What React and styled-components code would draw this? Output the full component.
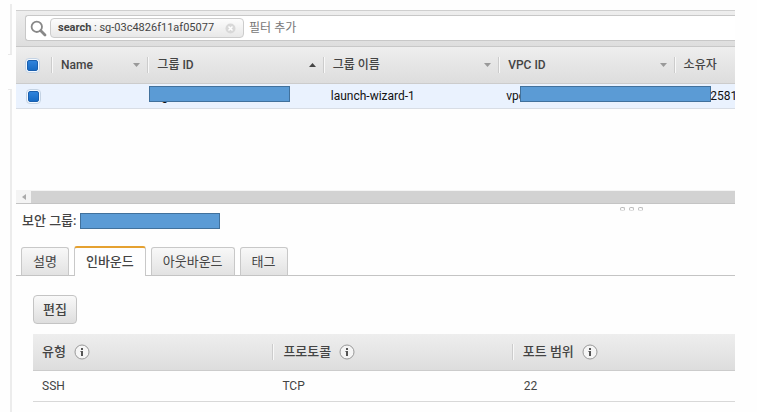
import React from "react";
import styled, { createGlobalStyle } from "styled-components";

const GlobalStyle = createGlobalStyle`
  *, *::before, *::after { box-sizing: border-box; }
  body {
    margin: 0;
    background: #fefefe;
    color: #444;
    font: 12px/16px Roboto, "Noto Sans CJK KR", sans-serif;
  }
  button, input { font: inherit; color: inherit; }
`;

const Page = styled.div`
  display: flex;
  min-height: 100vh;
  padding-right: 22px;
  overflow: hidden;
`;

const Rail = styled.aside`
  flex: 0 0 16px;
  display: flex;
  flex-direction: column;
  gap: 34px;
  padding: 4px 4px 0 8px;
`;

const RailPanel = styled.div`
  border-right: 2px solid #ececec;
  border-top: ${(p) => (p.$fill ? "1px solid #e8e8e8" : "0")};
  border-bottom: ${(p) => (p.$fill ? "0" : "1px solid #e8e8e8")};
  ${(p) => (p.$fill ? "flex: 1;" : "height: 51px;")}
`;

const Main = styled.main`
  flex: 1;
  min-width: 0;
  padding-top: 10px;
`;

const FilterBar = styled.div`
  padding: 4px 0 5px 9px;
  border-top: 1px solid #cfcfcf;
  border-bottom: 1px solid #c8c8c8;
  background: linear-gradient(#eeeeee, #dedede);
`;

const SearchBox = styled.div`
  display: flex;
  align-items: center;
  height: 26px;
  padding-left: 4px;
  border: 1px solid #c8c8c8;
  border-right: 0;
  border-radius: 3px 0 0 3px;
  background: #fff;
`;

const Chip = styled.span`
  display: flex;
  align-items: center;
  flex: none;
  height: 20px;
  margin-left: 3px;
  padding: 0 7px;
  gap: 11px;
  border: 1px solid #ccc;
  border-radius: 4px;
  background: linear-gradient(#fcfcfc, #e8e8e8);
  font-size: 11px;
  white-space: pre;
`;

const ClearButton = styled.button`
  display: flex;
  padding: 0;
  border: 0;
  background: none;
`;

const FilterInput = styled.input`
  flex: 1;
  min-width: 0;
  height: 20px;
  padding: 0 5px;
  border: 0;
  outline: 0;
  background: none;
  &::placeholder { color: #777; opacity: 1; }
`;

const GridPanel = styled.section`
  height: 143px;
  overflow: hidden;
`;

const Grid = styled.table`
  width: 100%;
  table-layout: fixed;
  border-collapse: separate;
  border-spacing: 0;
`;

const Col = styled.col`
  width: ${(p) => p.$w};
`;

const HeadCell = styled.th`
  height: 37px;
  padding: 0 7px 0 9px;
  text-align: left;
  font-weight: 500;
  color: #444;
  border-bottom: 1px solid #ccc;
  background: linear-gradient(#eeeeee, #dddddd);
`;

const CheckHead = styled(HeadCell)`
  padding: 0 0 0 9px;
`;

const HeadInner = styled.div`
  display: flex;
  align-items: center;
  justify-content: space-between;
  height: 16px;
  margin-left: -9px;
  padding-left: 9px;
  border-left: 1px solid #ccc;
  box-shadow: inset 1px 0 #f8f8f8;
`;

const Cell = styled.td`
  position: relative;
  height: 25px;
  padding: 0 0 0 ${(p) => p.$pad || "8px"};
  color: #111;
  white-space: nowrap;
  border-bottom: 1px solid #d8dde5;
  background: #eaf2fe;
`;

const Check = styled.input`
  appearance: none;
  display: block;
  width: 15px;
  height: 15px;
  margin: 0;
  border: 1px solid #c4d3e4;
  border-radius: 4px;
  background: #f4f9ff;
  padding: 1px;
  &:checked::before {
    content: "";
    display: block;
    width: 11px;
    height: 11px;
    border: 1px solid #1a5fae;
    border-radius: 2px;
    background: linear-gradient(#2f83dc, #176bc5);
  }
`;

const Mask = styled.span`
  flex: none;
  width: ${(p) => p.$w};
  height: 16px;
  border: 1px solid #41719c;
  background: #5b9bd5;
`;

const CellMask = styled(Mask)`
  position: absolute;
  z-index: 1;
  top: 2px;
  left: ${(p) => p.$left};
`;

const ScrollBar = styled.div`
  display: flex;
  align-items: center;
  height: 14px;
  border-bottom: 1px solid #c4c4c4;
  background: #f4f4f4;
`;

const ScrollButton = styled.button`
  display: flex;
  align-items: center;
  justify-content: center;
  width: 15px;
  height: 12px;
  padding: 0;
  border: 0;
  background: none;
`;

const ScrollThumb = styled.div`
  flex: 1;
  height: 12px;
  background: #d2d2d2;
`;

const Splitter = styled.div`
  display: flex;
  justify-content: flex-end;
  gap: 4px;
  height: 9px;
  padding: 3px 92px 0 0;
`;

const Grip = styled.i`
  width: 5px;
  height: 4px;
  border: 1px solid #bbb;
  border-bottom-color: #ddd;
  border-radius: 2px;
`;

const Title = styled.h2`
  display: flex;
  align-items: center;
  gap: 3px;
  margin: 0;
  padding-left: 6px;
  font-size: 13px;
  line-height: 16px;
  font-weight: 500;
`;

const Tabs = styled.div`
  display: flex;
  gap: 5px;
  height: 30px;
  margin-top: 17px;
  padding-left: 5px;
  border-bottom: 1px solid #c4c4c4;
`;

const Tab = styled.button`
  height: ${(p) => (p.$active ? "30px" : "29px")};
  margin-top: ${(p) => (p.$active ? "0" : "1px")};
  padding: 0 11px;
  border: 1px solid #c8c8c8;
  border-bottom: ${(p) => (p.$active ? "0" : "1px solid #c4c4c4")};
  border-top: ${(p) => (p.$active ? "2px solid #e5a130" : "1px solid #c8c8c8")};
  border-radius: 3px 3px 0 0;
  background: ${(p) => (p.$active ? "#fefefe" : "linear-gradient(#f8f8f8, #e2e2e2)")};
  font-size: 13px;
  line-height: 16px;
  font-weight: ${(p) => (p.$active ? 500 : 400)};
`;

const Detail = styled.section`
  padding: 19px 0 0 17px;
`;

const EditButton = styled.button`
  display: block;
  height: 29px;
  margin-bottom: 10px;
  padding: 0 9px;
  border: 1px solid #c4c4c4;
  border-radius: 4px;
  background: linear-gradient(#f9f9f9, #dedede);
  font-size: 13px;
  line-height: 16px;
  font-weight: 500;
`;

const RuleHead = styled(HeadCell)`
  height: 37px;
  padding: 0;
  font-size: 13px;
`;

const RuleLabel = styled.div`
  display: flex;
  align-items: center;
  gap: 8px;
  height: 16px;
  padding-left: ${(p) => (p.$first ? "9px" : "10px")};
  border-left: ${(p) => (p.$first ? "0" : "1px solid #ccc")};
  box-shadow: ${(p) => (p.$first ? "none" : "inset 1px 0 #f8f8f8")};
`;

const RuleCell = styled.td`
  height: 31px;
  padding: 0 0 0 ${(p) => p.$pad};
  border-bottom: 1px solid #d8d8d8;
`;

const SearchIcon = () => (
  <svg width="17" height="17" viewBox="0 0 17 17" fill="none" stroke="#888" aria-hidden="true">
    <circle cx="6.8" cy="6.8" r="5.2" strokeWidth="1.8" />
    <path d="M10.8 10.8 15 15" strokeWidth="2.8" strokeLinecap="round" />
  </svg>
);

const ClearIcon = () => (
  <svg width="11" height="11" viewBox="0 0 11 11" aria-hidden="true">
    <circle cx="5.5" cy="5.5" r="5" fill="#d8d8d8" />
    <path d="m3.5 3.5 4 4m0-4-4 4" stroke="#fff" strokeWidth="1.5" />
  </svg>
);

const SortIcon = ({ up }) => (
  <svg width="7" height="4" viewBox="0 0 7 4" aria-hidden="true">
    <path d={up ? "M0 4 3.5 0 7 4Z" : "M0 0h7L3.5 4Z"} fill={up ? "#444" : "#999"} />
  </svg>
);

const InfoIcon = () => (
  <svg width="16" height="16" viewBox="0 0 16 16" aria-hidden="true">
    <circle cx="8" cy="8" r="7" fill="#f5f5f5" stroke="#999" />
    <rect x="7" y="4" width="2" height="2" fill="#555" />
    <path d="M7 7h2v5H7Z" fill="#555" />
    <path d="M6 7h1v1H6Z" fill="#999" />
  </svg>
);

const columns = [
  { label: "Name" },
  { label: "그룹 ID", up: true },
  { label: "그룹 이름" },
  { label: "VPC ID" },
  { label: "소유자", plain: true },
];

const rules = ["유형", "프로토콜", "포트 범위"];
const tabs = ["설명", "인바운드", "아웃바운드", "태그"];

export default function App() {
  return (
    <Page>
      <GlobalStyle />
      <Rail>
        <RailPanel />
        <RailPanel $fill />
      </Rail>
      <Main>
        <FilterBar>
          <SearchBox>
            <SearchIcon />
            <Chip>
              <span><b>search</b> : sg-03c4826f11af05077</span>
              <ClearButton aria-label="필터 제거"><ClearIcon /></ClearButton>
            </Chip>
            <FilterInput aria-label="필터 추가" placeholder="필터 추가" />
          </SearchBox>
        </FilterBar>
        <GridPanel>
          <Grid>
            <colgroup>
              <Col $w="35px" />
              <Col $w="13.4%" />
              <Col $w="24.4%" />
              <Col $w="24.4%" />
              <Col $w="24.4%" />
              <Col />
            </colgroup>
            <thead>
              <tr>
                <CheckHead><Check type="checkbox" defaultChecked aria-label="모두 선택" /></CheckHead>
                {columns.map((c) => (
                  <HeadCell key={c.label}>
                    <HeadInner>
                      {c.label}
                      {!c.plain && <SortIcon up={c.up} />}
                    </HeadInner>
                  </HeadCell>
                ))}
              </tr>
            </thead>
            <tbody>
              <tr>
                <Cell $pad="10px"><Check type="checkbox" defaultChecked aria-label="launch-wizard-1 선택" /></Cell>
                <Cell />
                <Cell>sg-<CellMask $w="141px" $left="2px" /></Cell>
                <Cell>launch-wizard-1</Cell>
                <Cell>vpc<CellMask $w="191px" $left="22px" /></Cell>
                <Cell $pad="30px">42581</Cell>
              </tr>
            </tbody>
          </Grid>
        </GridPanel>
        <ScrollBar>
          <ScrollButton aria-label="왼쪽으로 스크롤">
            <svg width="4" height="6" viewBox="0 0 4 6" aria-hidden="true"><path d="M4 0v6L0 3Z" fill="#aaa" /></svg>
          </ScrollButton>
          <ScrollThumb />
        </ScrollBar>
        <Splitter><Grip /><Grip /><Grip /></Splitter>
        <Title>보안 그룹:<Mask $w="140px" /></Title>
        <Tabs role="tablist">
          {tabs.map((t, i) => (
            <Tab key={t} role="tab" aria-selected={i === 1} $active={i === 1}>{t}</Tab>
          ))}
        </Tabs>
        <Detail>
          <EditButton>편집</EditButton>
          <Grid>
            <colgroup>
              <Col $w="34.1%" />
              <Col $w="34.1%" />
              <Col />
            </colgroup>
            <thead>
              <tr>
                {rules.map((r, i) => (
                  <RuleHead key={r}>
                    <RuleLabel $first={i === 0}>{r}<InfoIcon /></RuleLabel>
                  </RuleHead>
                ))}
              </tr>
            </thead>
            <tbody>
              <tr>
                <RuleCell $pad="9px">SSH</RuleCell>
                <RuleCell $pad="10px">TCP</RuleCell>
                <RuleCell $pad="12px">22</RuleCell>
              </tr>
            </tbody>
          </Grid>
        </Detail>
      </Main>
    </Page>
  );
}
